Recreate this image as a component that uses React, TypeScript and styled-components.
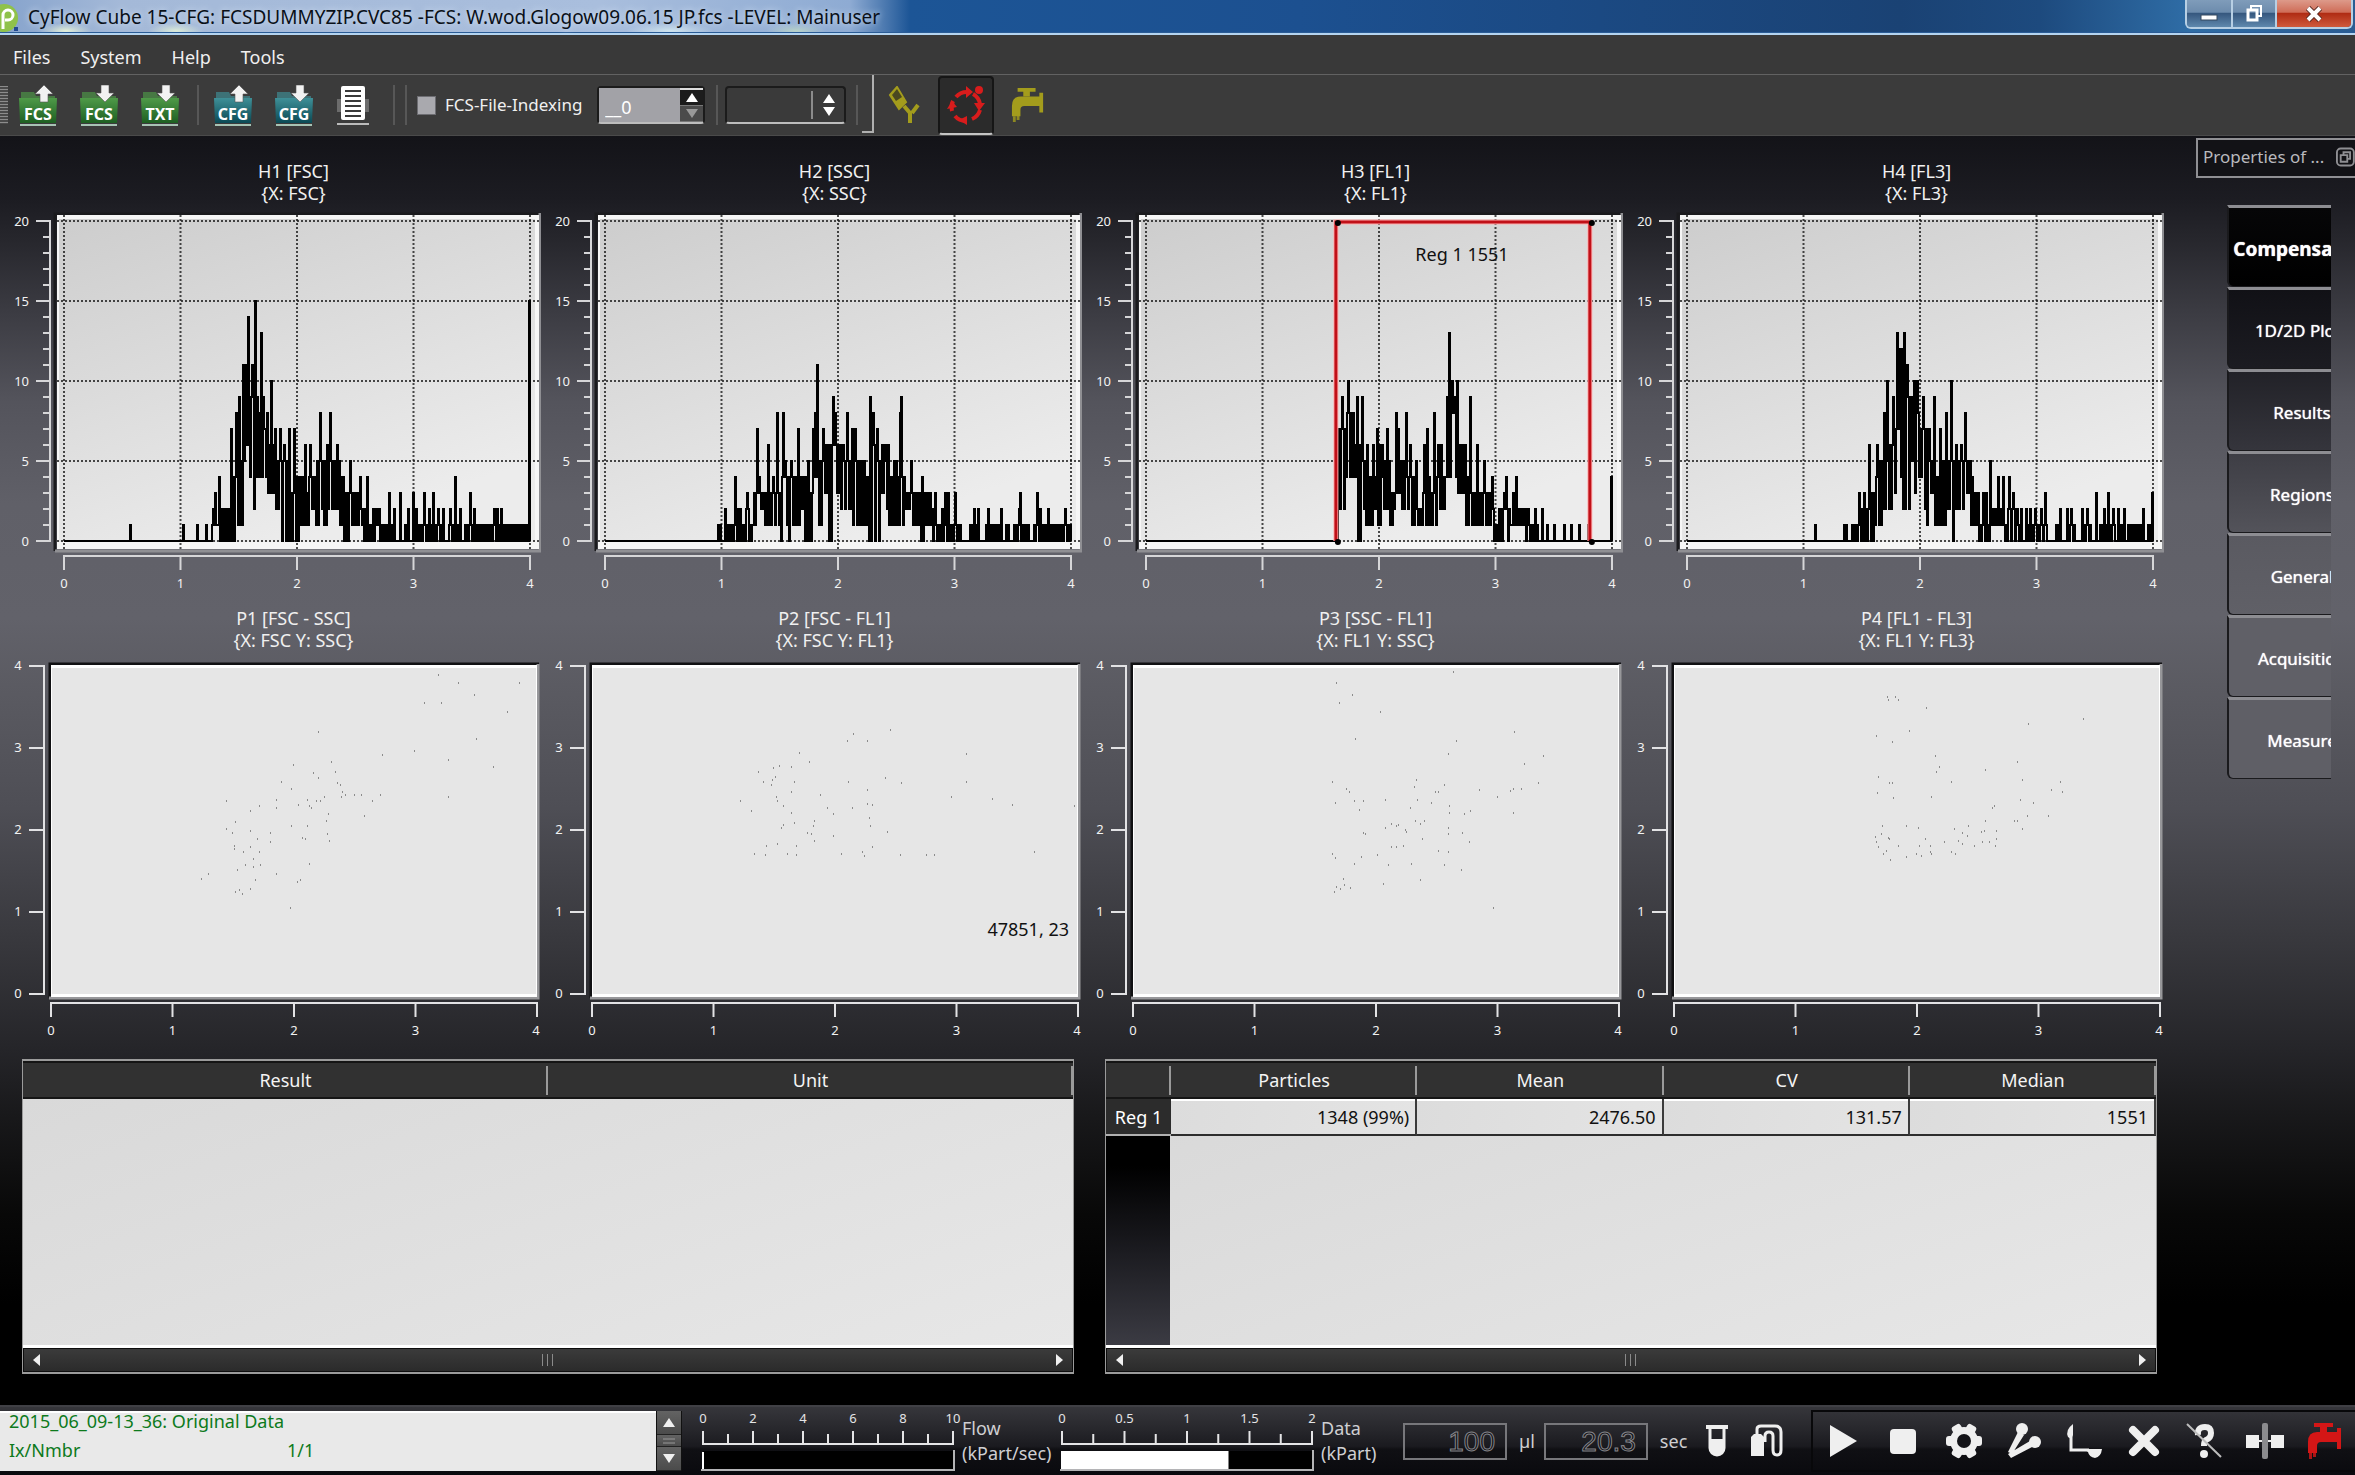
import React from "react";
import styled, { createGlobalStyle, css } from "styled-components";

const GlobalStyle = createGlobalStyle`
  * { box-sizing: border-box; }
  body {
    margin: 0;
    background: #000;
    color: #f0f0f0;
    font: 18px/22px "Noto Sans", "Open Sans", sans-serif;
  }
  button, input, select { font: inherit; color: inherit; border: 0; padding: 0; background: none; border-radius: 0; }
  svg { display: block; }
`;

/* ---------- window frame ---------- */

const Window = styled.div`
  display: flex;
  flex-direction: column;
  min-height: 100vh;
  overflow: hidden;
`;

const TitleBar = styled.header`
  display: flex;
  align-items: center;
  height: 35px;
  border-bottom: 2px solid #b4d4f0;
  box-shadow: inset 0 -1px 0 #2a5c96;
  background:
    radial-gradient(ellipse 26px 8px at 66px 31px, #e4f0d8, transparent),
    radial-gradient(ellipse 28px 8px at 176px 31px, #dcebd8, transparent),
    radial-gradient(ellipse 44px 8px at 670px 31px, #cfe4ee, transparent),
    radial-gradient(ellipse 30px 8px at 796px 31px, #b8d2c8, transparent),
    linear-gradient(90deg, #86a3cc 0, #a4b9d8 120px, #a9bedd 600px, #8eabd3 850px, #1c5596 910px, #1c5090 1300px, #1a4274 1900px, #1d4a7e 2040px, #2f6da6 2190px, #2a5c92 100%);
`;

const AppLogo = styled.svg`
  flex: none;
  width: 20px;
  height: 32px;
`;

const WindowTitle = styled.h1`
  flex: 1;
  margin: 0 0 0 8px;
  font-size: 19px;
  font-weight: 400;
  color: #0a1018;
  text-shadow: 0 0 6px #dbe7f6;
  white-space: nowrap;
`;

const WindowControls = styled.div`
  display: flex;
  align-self: flex-start;
  height: 29px;
  margin-right: 2px;
  border: 2px solid #b7cfe4;
  border-top: 0;
  border-radius: 0 0 6px 6px;
  overflow: hidden;
`;

const ControlButton = styled.button<{ $close?: boolean }>`
  display: grid;
  place-items: center;
  width: ${(p) => (p.$close ? 76 : 44)}px;
  background: linear-gradient(#7f9cba 0, #6d8cad 45%, #36587f 50%, #5f88ad 100%);
  & + & { border-left: 2px solid #b7cfe4; }
  ${(p) => p.$close && css`background: linear-gradient(#dd9a8a 0, #cf6d58 45%, #b02c14 50%, #cf5a3c 100%);`}
`;

const MenuBar = styled.nav`
  display: flex;
  gap: 30px;
  align-items: center;
  height: 40px;
  padding: 4px 0 0 13px;
  border-bottom: 1px solid #626262;
  background: #393939;
`;

const MenuButton = styled.button`
  line-height: 24px;
`;

/* ---------- toolbar ---------- */

const ToolBar = styled.div`
  display: flex;
  align-items: center;
  height: 61px;
  background: #3b3b3b;
  border-bottom: 1px solid #4a4a4a;
`;

const Grip = styled.span`
  width: 8px;
  height: 38px;
  margin-right: 11px;
  background: repeating-linear-gradient(#8c8c8c 0 1px, #4a4a4a 1px 3px);
`;

const ToolGroup = styled.div<{ $gap?: number }>`
  display: flex;
  align-items: center;
  gap: ${(p) => p.$gap ?? 23}px;
`;

const ToolButton = styled.button`
  display: block;
`;

const ModeButton = styled.button<{ $on?: boolean }>`
  display: grid;
  place-items: center;
  width: 56px;
  height: 59px;
  border-radius: 4px;
  ${(p) => p.$on && css`
    background: #2b2b2b;
    border: 2px solid #161616;
    border-bottom: 2px solid #c4c4c4;
  `}
`;

const Divider = styled.span<{ $l?: number; $r?: number }>`
  width: 2px;
  height: 40px;
  margin: 0 ${(p) => p.$r ?? 10}px 0 ${(p) => p.$l ?? 10}px;
  background: #575757;
`;

const Handle = styled.span`
  align-self: stretch;
  width: 12px;
  margin: 0 2px 2px 4px;
  border: 2px solid #b0b0b0;
  border-left: 0;
  border-top: 0;
`;

const CheckLabel = styled.label`
  display: flex;
  align-items: center;
  gap: 9px;
  font-size: 17px;
  white-space: nowrap;
`;

const CheckBox = styled.input`
  appearance: none;
  width: 19px;
  height: 19px;
  margin: 0;
  background: #a9a9ae;
  border: 1px solid #6d6d72;
`;

const SpinBox = styled.div`
  display: flex;
  width: 108px;
  height: 38px;
  margin-left: 15px;
  border: 2px solid #1b1b1b;
  border-bottom: 2px solid #bdbdbd;
  border-radius: 4px;
`;

const SpinInput = styled.input`
  flex: 1;
  min-width: 0;
  padding: 4px 0 0 6px;
  background: #a2a2a7;
  color: #fff;
`;

const SpinArrows = styled.div`
  display: grid;
  grid-template-rows: 1fr 1fr;
  width: 23px;
  border-top: 2px solid #ddd;
`;

const SpinArrow = styled.button<{ $dim?: boolean }>`
  display: grid;
  place-items: center;
  background: ${(p) => (p.$dim ? "#4b4b4b" : "#1c1c1c")};
  color: ${(p) => (p.$dim ? "#999" : "#fff")};
  border-bottom: 1px solid #777;
`;

const ComboBox = styled.div`
  position: relative;
  width: 121px;
  height: 38px;
  border: 2px solid #1b1b1b;
  border-bottom: 2px solid #bdbdbd;
  border-radius: 4px;
  background: #3a3a3a;
`;

const ComboSelect = styled.select`
  appearance: none;
  width: 100%;
  height: 100%;
`;

const ComboArrows = styled.span`
  position: absolute;
  top: 3px;
  right: 0;
  bottom: 3px;
  display: grid;
  place-items: center;
  width: 33px;
  border-left: 2px solid #8c8c8c;
  pointer-events: none;
`;

/* ---------- workspace ---------- */

const Main = styled.main`
  display: grid;
  flex: 1;
  grid-template-columns: minmax(0, 1fr) 191px;
  background: linear-gradient(#131318 0, #1c1c22 5%, #26262c 8%, #3c3c43 14%, #54545c 21%, #606068 29%, #62626a 38%, #5a5a61 44%, #4e4e55 53%, #39393e 63%, #252529 72%, #19191b 77%, #080808 85%, #000 92%);
`;

const Workspace = styled.section`
  display: flex;
  flex-direction: column;
  gap: 16px;
  padding: 24px 0 31px;
`;

const PlotGrid = styled.div`
  display: grid;
  grid-template-columns: repeat(4, minmax(0, 1fr));
  row-gap: 11px;
`;

const Plot = styled.figure`
  margin: 0;
`;

const PlotTitle = styled.figcaption`
  padding-left: 46px;
  text-align: center;
  white-space: pre-line;
`;

const PlotSvg = styled.svg`
  width: 100%;
  height: auto;
  font: 13px "Noto Sans", sans-serif;
`;

const TableRow = styled.div`
  display: grid;
  flex: 1;
  grid-template-columns: 1fr 1fr;
  gap: 31px;
  padding: 0 7px 0 22px;
`;

const TablePanel = styled.section`
  display: flex;
  flex-direction: column;
  min-height: 280px;
  border: 2px solid #9b9b9b;
  border-left-width: 1px;
  border-right-width: 1px;
`;

const TableArea = styled.div<{ $rowHead?: boolean }>`
  flex: 1;
  border-bottom: 3px solid #fff;
  background: ${(p) => p.$rowHead && "linear-gradient(#000 30px, #1b1b20 55%, #3b3b43) 0 0 / 64px 100% no-repeat,"}
    linear-gradient(160deg, #d9d9d9, #e7e7e7);
`;

const Table = styled.table`
  width: 100%;
  border-collapse: separate;
  border-spacing: 0;
  table-layout: fixed;
`;

const HeadCell = styled.th<{ $w?: number }>`
  width: ${(p) => (p.$w ? `${p.$w}px` : "auto")};
  height: 38px;
  padding: 0;
  font-weight: 400;
  color: #f4f4f4;
  border-bottom: 2px solid #151515;
  border-top: 2px solid #151515;
  background:
    linear-gradient(#9a9a9a, #9a9a9a) 100% 3px / 2px 29px no-repeat,
    #313131;
`;

const RowHead = styled.th`
  height: 37px;
  padding: 0;
  font-weight: 400;
  color: #fff;
  background: #2c2c2c;
  border-bottom: 2px solid #b0b0b0;
`;

const Cell = styled.td`
  padding: 0 6px 0 0;
  text-align: right;
  color: #111;
  background: linear-gradient(100deg, #dcdcdc, #e4e4e4);
  border-right: 2px solid #3b3b3b;
  border-bottom: 2px solid #2d2d2d;
  box-shadow: inset 0 2px 0 #fff;
`;

const ScrollBar = styled.div`
  display: flex;
  align-items: center;
  justify-content: space-between;
  height: 24px;
  border: 1px solid #0d0d0d;
  background: linear-gradient(#3b3b3b, #2b2b2b);
`;

const ScrollButton = styled.button`
  display: grid;
  place-items: center;
  width: 25px;
  height: 22px;
`;

const Thumb = styled.span`
  width: 12px;
  height: 12px;
  background: repeating-linear-gradient(90deg, #8a8a8a 0 1px, transparent 1px 5px);
`;

/* ---------- properties dock ---------- */

const Dock = styled.aside`
  padding-top: 2px;
`;

const DockTitle = styled.h2`
  display: flex;
  align-items: center;
  gap: 12px;
  height: 40px;
  margin: 0 0 27px 32px;
  padding: 0 0 2px 5px;
  font-size: 17px;
  font-weight: 400;
  color: #b9b9bd;
  white-space: nowrap;
  overflow: hidden;
  border: 2px solid #8f8f93;
  border-right: 0;
  background: #121216;
`;

const TabStrip = styled.div`
  width: 104px;
  margin-left: 63px;
  overflow: hidden;
`;

const Tab = styled.button<{ $bg: string; $active?: boolean }>`
  display: block;
  width: 148px;
  height: 82px;
  padding-top: 4px;
  font-size: ${(p) => (p.$active ? 19 : 17)}px;
  font-weight: ${(p) => (p.$active ? 700 : 400)};
  color: #fff;
  text-align: center;
  text-shadow: 0 0 1px #fff;
  background: ${(p) => p.$bg};
  border-top: 3px solid #8d8d92;
  border-left: 2px solid #1a1a1d;
  border-bottom: 1px solid #1a1a1d;
  border-radius: 0 0 0 6px;
`;

/* ---------- status bar ---------- */

const StatusBar = styled.footer`
  display: flex;
  align-items: center;
  height: 70px;
  border-top: 2px solid #404045;
  background: linear-gradient(#36363b 0, #26262b 35%, #1a1a1f 58%, #101014 62%, #0a0a0e 100%);
`;

const Log = styled.dl`
  display: grid;
  grid-template-columns: 278px 1fr;
  align-content: start;
  flex: none;
  width: 656px;
  height: 60px;
  margin: 0;
  padding-left: 9px;
  line-height: 29px;
  color: #0d7a1c;
  background: #e9e9e9;
  border-top: 2px solid #fff;
  white-space: nowrap;
`;

const LogText = styled.dt<{ $wide?: boolean }>`
  margin: -6px 0 6px;
  grid-column: ${(p) => (p.$wide ? "1 / -1" : "auto")};
`;

const LogValue = styled.dd`
  margin: -6px 0 6px;
`;

const LogScroll = styled.div`
  display: grid;
  grid-template-rows: 24px 12px 24px;
  width: 26px;
  padding: 0 1px;
  background: #111;
  margin-right: 12px;
`;

const LogScrollButton = styled.button`
  display: grid;
  place-items: center;
  background: linear-gradient(#636363, #4b4b4b);
  border-bottom: 1px solid #222;
`;

const GaugeSvg = styled.svg`
  flex: none;
  font: 13px "Noto Sans", sans-serif;
`;

const GaugeLabel = styled.span<{ $w: number }>`
  flex: none;
  width: ${(p) => p.$w}px;
  line-height: 25px;
  color: #cfcfd2;
  white-space: pre-line;
`;

const Lcd = styled.output`
  width: 104px;
  height: 37px;
  padding-right: 10px;
  border: 2px solid #77777b;
  text-align: right;
  font: 28px/33px "Liberation Sans", sans-serif;
  color: #121216;
  -webkit-text-stroke: 1px #85858a;
`;

const Unit = styled.span`
  margin: 0 9px 0 12px;
  color: #cfcfd2;
`;

const DeviceButtons = styled.div`
  display: flex;
  gap: 22px;
  margin-left: 10px;
`;

const ActionBar = styled.div`
  display: flex;
  width: 544px;
  height: 62px;
  margin-left: auto;
  border: 2px solid #08080a;
  border-right: 0;
`;

const ActionButton = styled.button`
  display: grid;
  place-items: center;
  flex: 1;
  min-width: 0;
`;

/* ---------- icons ---------- */

const Arrow = ({ dir, w = 12, h = 9 }: { dir: "up" | "down" | "left" | "right"; w?: number; h?: number }) => {
  const d = {
    up: "M0 10L5 0L10 10Z",
    down: "M0 0L5 10L10 0Z",
    left: "M10 0L0 5L10 10Z",
    right: "M0 0L10 5L0 10Z",
  }[dir];
  return (
    <svg width={w} height={h} viewBox="0 0 10 10" preserveAspectRatio="none" aria-hidden="true">
      <path d={d} fill="currentColor" />
    </svg>
  );
};

const FolderIcon = ({ label, tone, dir }: { label: string; tone: "green" | "teal"; dir: "up" | "down" }) => {
  const c = tone === "green" ? ["#4f9a48", "#1d5f22"] : ["#3f9098", "#0b4a55"];
  const id = `folder-${tone}`;
  return (
    <svg width="38" height="41" viewBox="0 0 38 41" aria-hidden="true">
      <defs>
        <linearGradient id={id} x1="0" y1="0" x2="0" y2="1">
          <stop offset="0" stopColor={c[0]} />
          <stop offset="1" stopColor={c[1]} />
        </linearGradient>
      </defs>
      <path d="M2 7h13l2 4h19v9H2z" fill={c[0]} opacity=".65" />
      <path d="M0 13h38l-1 25H1z" fill={`url(#${id})`} />
      <path d={dir === "up" ? "M25 0l9 9h-5v8h-8V9h-5z" : "M21 0h8v8h5l-9 9-9-9h5z"} fill="#f2f2f2" stroke="#555" strokeWidth=".6" />
      <text x="19" y="35" textAnchor="middle" fontFamily='"Noto Sans", sans-serif' fontSize="16" fontWeight="700" fill="#fff">{label}</text>
      <path d="M1 40h36" stroke="#a7c3b4" strokeWidth="2" />
    </svg>
  );
};

const PageIcon = () => (
  <svg width="34" height="41" viewBox="0 0 34 41" aria-hidden="true">
    <path d="M1 14h32v13H1z" fill="#8d8d8d" opacity=".6" />
    <rect x="5" y="1" width="24" height="34" rx="2" fill="#fff" />
    <path d="M9 6h16M9 11h16M9 16h16M9 21h16M9 26h16M9 31h16" stroke="#3a3a3a" strokeWidth="2" />
    <path d="M1 39h32" stroke="#bbb" strokeWidth="2" />
  </svg>
);

const PourIcon = () => (
  <svg width="32" height="38" viewBox="0 0 32 38" fill="none" stroke="#a39c1c" aria-hidden="true">
    <path d="M2 9L9 1l9 15-7 7z" fill="#a39c1c" strokeWidth="2" />
    <path d="M4 9l5-6 5 8-6 4z" fill="#4a4820" stroke="none" />
    <path d="M16 20l6 7v10M30 19l-6 8" strokeWidth="4" />
  </svg>
);

const CycleIcon = () => (
  <svg width="38" height="40" viewBox="0 0 38 40" fill="none" stroke="#d81c1c" strokeWidth="4" aria-hidden="true">
    <path d="M9 12A14 14 0 0 1 20 7" />
    <path d="M26 9A14 14 0 0 1 33 19" />
    <path d="M33 25A14 14 0 0 1 25 34" />
    <path d="M19 36A14 14 0 0 1 8 31" />
    <path d="M5 26A14 14 0 0 1 6 16" />
    <path d="M19 1l7 6-7 6zM38 18l-6 8-5-8zM20 31l-8 4 8 5zM0 24l5-8 5 6z" fill="#d81c1c" stroke="none" />
    <circle cx="32" cy="5" r="4" fill="#d81c1c" stroke="none" />
  </svg>
);

const TapIcon = ({ color, w = 36 }: { color: string; w?: number }) => (
  <svg width={w} height="38" viewBox="0 0 36 38" fill={color} aria-hidden="true">
    <path d="M7 1h19v4H7zM13 5h7v5h-7z" />
    <path d="M10 10h20V6h4v21h-4v-7H14q-4 0-4 4v7H1V20Q1 10 10 10z" />
    <path d="M2 31h3v6H2zM6 30h3v5H6z" opacity=".8" />
  </svg>
);

const W = "#efefef";

const TubeIcon = () => (
  <svg width="22" height="34" viewBox="0 0 22 34" fill="none" aria-hidden="true">
    <path d="M0 3h22" stroke={W} strokeWidth="4" />
    <path d="M4 4v20a7 7 0 0 0 14 0V4" stroke={W} strokeWidth="3" />
    <path d="M4 15h14v9a7 7 0 0 1-14 0z" fill={W} />
  </svg>
);

const PumpIcon = () => (
  <svg width="34" height="34" viewBox="0 0 34 34" fill="none" aria-hidden="true">
    <path d="M1 13l3-3h7l3 3v19H1z" fill={W} />
    <path d="M7 10V5q0-3 4-3h14q6 0 6 6v18q0 5-4 5t-4-5V12q0-4-4-4t-4 4v6" stroke={W} strokeWidth="3" />
  </svg>
);

const PlayIcon = () => (
  <svg width="30" height="34" viewBox="0 0 30 34" aria-hidden="true"><path d="M2 1l27 16L2 33z" fill={W} /></svg>
);

const StopIcon = () => (
  <svg width="28" height="28" viewBox="0 0 28 28" aria-hidden="true"><rect x="1" y="2" width="26" height="25" rx="4" fill={W} /></svg>
);

const GearIcon = () => (
  <svg width="38" height="38" viewBox="0 0 38 38" aria-hidden="true">
    <g fill={W}>
      {[30, 90, 150].map((a) => (
        <rect key={a} x="14" y="1" width="10" height="36" rx="3" transform={`rotate(${a} 19 19)`} />
      ))}
      <circle cx="19" cy="19" r="14" />
    </g>
    <circle cx="19" cy="19" r="7" fill="#141418" />
  </svg>
);

const ProbesIcon = () => (
  <svg width="36" height="36" viewBox="0 0 36 36" fill={W} aria-hidden="true">
    <circle cx="16" cy="6" r="6" />
    <circle cx="29" cy="19" r="6" />
    <path d="M12 9l6 3L6 31l-4-2zM24 18l4 5L5 35l-3-4z" />
  </svg>
);

const SeatIcon = () => (
  <svg width="38" height="36" viewBox="0 0 38 36" fill={W} aria-hidden="true">
    <path d="M8 1q-8 6-5 13l3 2 2-4z" />
    <path d="M6 12v15h18" fill="none" stroke={W} strokeWidth="3" />
    <path d="M19 26h18q-1 8-7 9-6-1-7-6z" />
  </svg>
);

const CrossIcon = () => (
  <svg width="32" height="32" viewBox="0 0 32 32" aria-hidden="true">
    <path d="M5 5l22 22M27 5L5 27" stroke={W} strokeWidth="8" strokeLinecap="round" />
  </svg>
);

const HelpIcon = () => (
  <svg width="36" height="36" viewBox="0 0 36 36" fill="none" stroke={W} aria-hidden="true">
    <path d="M12 12q-1-8 7-8 6 0 6 6 0 5-5 7-2 1-2 6" strokeWidth="6" />
    <circle cx="18" cy="31" r="4" fill={W} stroke="none" />
    <path d="M1 1l34 33" strokeWidth="2" stroke="#bdbdbd" />
  </svg>
);

const SplitIcon = () => (
  <svg width="40" height="38" viewBox="0 0 40 38" aria-hidden="true">
    <path d="M1 13h13v13H1zM26 13h13v13H26z" fill={W} />
    <path d="M13 19h14" stroke={W} strokeWidth="2" />
    <rect x="17" y="1" width="6" height="36" rx="2" fill="#8b8b8e" />
  </svg>
);

/* ---------- plots ---------- */

type Band = [x: number, low: number, high: number];
type Spike = [x: number, count: number];

interface Histogram {
  title: string;
  bands: Band[];
  spikes: Spike[];
  region?: { from: number; to: number; label: string };
}

/* Each band holds from its x up to the next one; counts alternate between low and high. */
const histograms: Histogram[] = [
  {
    title: "H1 [FSC]\n{X: FSC}",
    bands: [[1.27, 0, 2], [1.41, 0, 4], [1.45, 1, 5], [1.53, 4, 6], [1.57, 4, 9], [1.7, 4, 7], [1.74, 2, 6], [1.8, 2, 5], [1.86, 0, 5], [1.92, 0, 4], [2.0, 1, 4], [2.1, 2, 4], [2.16, 1, 5], [2.25, 2, 5], [2.36, 1, 4], [2.4, 0, 3], [2.6, 0, 2], [2.7, 0, 1]],
    spikes: [[0.565, 1], [1.02, 1], [1.14, 1], [1.22, 1], [1.3, 3], [1.33, 4], [1.43, 7], [1.48, 8], [1.5, 9], [1.535, 11], [1.56, 11], [1.58, 14], [1.61, 11], [1.637, 15], [1.67, 8], [1.695, 13], [1.72, 7], [1.74, 8], [1.78, 10], [1.81, 7], [1.85, 7], [1.89, 6], [1.935, 7], [1.978, 7], [2.065, 6], [2.11, 6], [2.2, 8], [2.26, 6], [2.287, 8], [2.34, 6], [2.455, 5], [2.54, 4], [2.6, 4], [2.79, 3], [2.83, 2], [2.88, 3], [2.95, 2], [2.995, 3], [3.02, 2], [3.09, 3], [3.13, 2], [3.17, 3], [3.21, 2], [3.25, 2], [3.31, 2], [3.36, 4], [3.4, 2], [3.487, 3], [3.52, 2], [3.69, 2], [3.72, 2], [3.75, 2], [3.995, 15]],
  },
  {
    title: "H2 [SSC]\n{X: SSC}",
    bands: [[0.944, 0, 1], [1.1, 0, 2], [1.27, 1, 3], [1.45, 1, 3], [1.5, 0, 4], [1.6, 1, 4], [1.7, 0, 4], [1.78, 1, 5], [1.86, 2, 6], [2.0, 2, 5], [2.1, 1, 5], [2.2, 1, 4], [2.26, 2, 6], [2.38, 1, 5], [2.5, 1, 4], [2.58, 1, 4], [2.64, 0, 3], [2.75, 0, 2], [2.96, 0, 1]],
    spikes: [[1.03, 2], [1.115, 4], [1.22, 3], [1.305, 7], [1.32, 4], [1.4, 6], [1.44, 4], [1.48, 8], [1.526, 8], [1.545, 5], [1.6, 5], [1.655, 7], [1.74, 5], [1.786, 7], [1.8, 8], [1.822, 11], [1.875, 7], [1.954, 9], [1.97, 8], [2.04, 6], [2.08, 8], [2.12, 7], [2.15, 7], [2.276, 9], [2.3, 8], [2.335, 7], [2.4, 6], [2.43, 6], [2.53, 8], [2.543, 9], [2.625, 5], [2.717, 4], [2.786, 3], [2.83, 3], [2.915, 3], [2.94, 3], [3.003, 3], [3.17, 2], [3.2, 2], [3.29, 2], [3.4, 2], [3.55, 2], [3.566, 3], [3.704, 3], [3.73, 2], [3.8, 2], [3.95, 2]],
  },
  {
    title: "H3 [FL1]\n{X: FL1}",
    bands: [[1.63, 4, 7], [1.67, 4, 8], [1.76, 4, 6], [1.8, 2, 6], [1.87, 1, 4], [2.0, 2, 5], [2.08, 1, 3], [2.13, 2, 5], [2.2, 1, 4], [2.3, 1, 3], [2.37, 1, 4], [2.5, 2, 5], [2.57, 4, 8], [2.66, 3, 6], [2.72, 1, 4], [2.86, 0, 3], [2.94, 0, 2], [3.23, 0, 1], [3.43, 0, 0]],
    spikes: [[1.68, 9], [1.735, 10], [1.775, 8], [1.815, 9], [1.857, 9], [1.9, 6], [1.95, 6], [1.98, 7], [2.0, 6], [2.03, 6], [2.07, 7], [2.145, 8], [2.16, 7], [2.235, 8], [2.265, 6], [2.32, 5], [2.39, 6], [2.416, 7], [2.472, 8], [2.51, 6], [2.53, 6], [2.58, 9], [2.603, 13], [2.625, 10], [2.64, 9], [2.673, 10], [2.7, 6], [2.785, 9], [2.84, 6], [2.9, 5], [2.97, 4], [3.07, 3], [3.094, 4], [3.15, 3], [3.18, 4], [3.28, 2], [3.34, 2], [3.4, 2], [3.44, 1], [3.5, 1], [3.59, 1], [3.645, 1], [3.72, 1], [3.79, 1], [3.99, 4]],
    region: { from: 1.63, to: 3.81, label: "Reg 1 1551" },
  },
  {
    title: "H4 [FL3]\n{X: FL3}",
    bands: [[1.31, 0, 1], [1.45, 0, 2], [1.53, 0, 3], [1.6, 1, 5], [1.66, 2, 6], [1.76, 3, 7], [1.8, 4, 9], [1.9, 5, 8], [1.99, 4, 7], [2.06, 3, 5], [2.12, 1, 5], [2.2, 2, 5], [2.34, 2, 5], [2.42, 1, 3], [2.5, 0, 2], [2.8, 0, 1]],
    spikes: [[1.1, 1], [1.48, 3], [1.52, 3], [1.565, 6], [1.63, 6], [1.69, 8], [1.716, 10], [1.765, 9], [1.805, 13], [1.82, 12], [1.845, 12], [1.864, 13], [1.89, 11], [1.93, 9], [1.95, 10], [1.97, 10], [2.03, 9], [2.08, 7], [2.12, 9], [2.17, 7], [2.22, 8], [2.27, 10], [2.31, 6], [2.35, 6], [2.383, 8], [2.45, 4], [2.54, 3], [2.57, 3], [2.597, 5], [2.666, 4], [2.712, 4], [2.768, 4], [2.8, 3], [2.83, 2], [2.87, 2], [2.91, 2], [2.94, 2], [2.99, 2], [3.04, 2], [3.074, 3], [3.2, 2], [3.26, 2], [3.3, 2], [3.39, 2], [3.43, 2], [3.514, 3], [3.58, 2], [3.616, 3], [3.66, 2], [3.7, 2], [3.75, 2], [3.91, 2], [3.99, 3]],
  },
];

const HX = (v: number) => 64 + v * 116.5;
const HY = (v: number) => 337 - v * 16;
const BINS = 466;

const tracePath = ({ bands, spikes }: Histogram) => {
  let seed = 7;
  const random = () => (seed = (seed * 16807) % 2147483647) / 2147483647;
  let low = 0;
  let high = 0;
  const counts = Array.from({ length: BINS + 1 }, (_, i) => {
    const x = (i / BINS) * 4;
    const band = bands.filter((b) => b[0] <= x).pop();
    if (!band) return 0;
    if (i % 4 === 0) {
      low = band[1] > 1 && random() < 0.3 ? band[1] - 2 : band[1] + (random() < 0.3 && band[2] > band[1] + 1 ? 1 : 0);
      high = band[2] > 0 && random() < 0.25 ? band[2] - 1 : band[2];
    }
    return i % 2 ? high : low;
  });
  spikes.forEach(([x, count]) => {
    counts[Math.round((x / 4) * BINS)] = count;
  });
  return `M${HX(0)} ${HY(0)}` + counts.map((c, i) => `H${Math.round(HX((i / BINS) * 4))}V${HY(c)}`).join("");
};

const ticks = (n: number, step = 1) => Array.from({ length: n + 1 }, (_, i) => i * step);

const HistogramPlot = ({ data, index }: { data: Histogram; index: number }) => (
  <Plot>
    <PlotTitle>{data.title}</PlotTitle>
    <PlotSvg viewBox="0 0 541 392">
      <defs>
        <linearGradient id={`hist${index}`} x1="0" y1="0" x2=".5" y2="1">
          <stop offset="0" stopColor="#cdcdcd" />
          <stop offset="1" stopColor="#ececec" />
        </linearGradient>
      </defs>
      <path d="M55 347V10H541" fill="none" stroke="#1a1a1d" strokeWidth="3" />
      <path d="M540 9V347H55" fill="none" stroke="#8f8f93" strokeWidth="3" />
      <rect x="57" y="11" width="482" height="334" fill="#f6f6f6" />
      <rect x="59" y="15" width="476" height="323" fill={`url(#hist${index})`} />
      <g stroke="#111" strokeWidth="2" strokeDasharray="2 2">
        {ticks(4).map((v) => <path key={v} d={`M${HX(v)} 11V345`} opacity=".75" />)}
        {ticks(4, 5).map((v) => <path key={v} d={`M57 ${HY(v)}H539`} opacity=".75" />)}
      </g>
      <path d={tracePath(data)} fill="none" stroke="#000" strokeWidth="2" />
      <g stroke="#d6d6d8" strokeWidth="2" fill="none">
        <path d={`M50 ${HY(20) - 1}V338`} />
        {ticks(20).map((v) => <path key={v} d={`M${v % 5 ? 43 : 36} ${HY(v)}H50`} />)}
        <path d="M63 352H531" />
        {ticks(4).map((v) => <path key={v} d={`M${HX(v)} 352V366`} />)}
      </g>
      <g fill="#f2f2f2">
        {ticks(4, 5).map((v) => <text key={v} x="29" y={HY(v) + 5} textAnchor="end">{v}</text>)}
        {ticks(4).map((v) => <text key={v} x={HX(v)} y="384" textAnchor="middle">{v}</text>)}
      </g>
      {data.region && (
        <>
          <path d={`M${HX(data.region.from)} 337V18H${HX(data.region.to)}V337`} fill="none" stroke="#ffb0b0" strokeWidth="5" />
          <path d={`M${HX(data.region.from)} 337V18H${HX(data.region.to)}V337`} fill="none" stroke="#c01018" strokeWidth="3" />
          {[data.region.from, data.region.to].map((v) => (
            <React.Fragment key={v}>
              <circle cx={HX(v) + 2} cy="19" r="3" />
              <circle cx={HX(v) + 2} cy="338" r="3" />
            </React.Fragment>
          ))}
          <text x="380" y="57" textAnchor="middle" fontSize="18" fill="#111">{data.region.label}</text>
        </>
      )}
    </PlotSvg>
  </Plot>
);

interface Scatter {
  title: string;
  origin: number;
  points: string;
  note?: string;
}

const scatters: Scatter[] = [
  {
    title: "P1 [FSC - SSC]\n{X: FSC Y: SSC}",
    origin: 73,
    points: "624,252 652,276 739,277 675,312 604,337 628,337 722,363 453,424 678,445 590,480 544,494 638,509 703,529 417,522 471,514 446,547 478,543 453,562 401,573 480,578 485,583 415,594 487,603 492,613 504,613 514,613 542,613 486,618 462,618 638,619 394,628 438,628 322,632 450,632 456,632 530,632 369,647 424,642 441,647 443,651 394,652 357,662 467,671 518,676 464,690 335,695 415,706 438,706 322,716 357,721 331,728 385,726 466,731 430,741 434,746 366,745 385,755 469,751 333,767 357,769 333,776 347,783 369,785 361,804 349,824 361,828 370,824 441,819 338,838 297,850 394,849 286,864 363,869 427,869 423,874 357,894 340,898 335,905 345,909 413,952",
  },
  {
    title: "P2 [FSC - FL1]\n{X: FSC Y: FL1}",
    origin: 844,
    points: "1268,418 1216,430 1207,450 1235,450 1139,486 1376,490 1153,514 1110,527 1128,529 1102,533 1081,544 1104,559 1261,562 1088,573 1100,569 1132,573 1209,573 1284,577 1376,573 1099,583 1235,598 1128,603 1169,613 1106,618 1355,618 1414,624 1055,632 1107,632 1235,641 1242,642 1442,642 1116,647 1530,647 1179,652 1214,652 1070,662 1128,666 1187,671 1238,682 1160,690 1131,696 1116,703 1113,711 1158,706 1240,706 1150,726 1156,731 1264,725 1187,736 1160,751 1092,765 1108,760 1135,765 1242,770 1074,790 1090,794 1121,789 1135,794 1198,790 1228,785 1231,795 1282,794 1320,794 1331,794 1474,785",
    note: "47851, 23",
  },
  {
    title: "P3 [SSC - FL1]\n{X: FL1 Y: SSC}",
    origin: 75,
    points: "531,243 364,276 387,312 368,337 427,363 618,424 391,445 535,450 523,490 659,495 632,519 359,573 478,569 518,583 475,588 652,577 378,594 382,603 505,603 509,603 567,598 616,594 628,594 612,602 593,618 389,632 403,632 434,628 480,628 363,637 499,637 525,647 397,657 470,652 525,666 547,671 555,660 616,666 476,691 490,691 483,700 443,701 434,711 452,703 450,707 462,717 464,725 524,711 402,726 406,731 523,731 544,726 486,746 553,755 443,770 450,770 460,765 509,780 523,785 359,790 363,803 399,799 423,794 389,819 438,824 471,819 518,824 542,839 374,864 483,869 431,879 375,882 364,890 370,895 384,893 361,905 588,952",
  },
  {
    title: "P4 [FL1 - FL3]\n{X: FL1 Y: FL3}",
    origin: 846,
    points: "1149,318 1161,318 1151,327 1165,327 1205,352 1429,386 1350,401 1181,420 1134,435 1156,455 1217,495 1334,515 1223,529 1219,543 1289,539 1137,558 1152,578 1157,578 1240,573 1341,569 1395,573 1383,598 1399,603 1135,608 1212,618 1158,623 1338,628 1357,637 1301,647 1299,652 1348,676 1378,676 1289,691 1330,691 1334,691 1142,706 1177,706 1193,711 1265,706 1244,716 1341,716 1256,726 1287,721 1283,725 1305,721 1141,731 1132,740 1263,736 1150,741 1152,745 1203,746 1251,751 1134,755 1230,755 1256,760 1285,755 1294,755 1305,746 1137,770 1165,765 1195,765 1210,765 1273,765 1303,765 1148,780 1144,790 1191,790 1211,785 1212,790 1241,785 1246,790 1177,799 1197,795 1154,808",
  },
];

const SX = (v: number) => 51 + v * 121.5;
const SY = (v: number) => 343 - v * 82;

const ScatterPlot = ({ data }: { data: Scatter }) => (
  <Plot>
    <PlotTitle>{data.title}</PlotTitle>
    <PlotSvg viewBox="0 0 541 392">
      <path d="M50 347V13H539" fill="none" stroke="#111113" strokeWidth="3" />
      <path d="M538 13V347H49" fill="none" stroke="#97979a" strokeWidth="3" />
      <rect x="51" y="14" width="486" height="332" fill="#fff" />
      <rect x="52" y="17" width="484" height="326" fill="#e6e6e6" />
      <g fill="#8c8c8c">
        {data.points.split(" ").map((p) => {
          const [x, y] = p.split(",").map(Number);
          return <rect key={p} x={Math.round(SX((x - data.origin) / 173))} y={Math.round(SY((1213 - y) / 246))} width="1" height="2" />;
        })}
      </g>
      <g stroke="#e2e2e4" strokeWidth="2" fill="none">
        <path d="M44 14V344" />
        {ticks(4).map((v) => <path key={v} d={`M29 ${SY(v)}H44`} />)}
        <path d="M50 352H538" />
        {ticks(4).map((v) => <path key={v} d={`M${SX(v)} 352V366`} />)}
      </g>
      <g fill="#f2f2f2" textAnchor="middle">
        {ticks(4).map((v) => <text key={v} x="18" y={SY(v) + 4}>{v}</text>)}
        {ticks(4).map((v) => <text key={v} x={v === 4 ? SX(v) - 1 : SX(v)} y="384">{v}</text>)}
      </g>
      {data.note && <text x="528" y="285" textAnchor="end" fontSize="18" fill="#111">{data.note}</text>}
    </PlotSvg>
  </Plot>
);

const Gauge = ({ labels, fill = 0, name }: { labels: string[]; fill?: number; name: string }) => {
  const step = 250 / (labels.length - 1);
  return (
    <GaugeSvg width="268" height="64" viewBox="0 0 268 64" role="img" aria-label={name}>
      <g fill="#e4e4e6" textAnchor="middle">
        {labels.map((l, i) => <text key={l} x={9 + i * step} y="14">{l}</text>)}
      </g>
      <g stroke="#e4e4e6" strokeWidth="2">
        <path d="M8 35H260" />
        {labels.map((l, i) => <path key={l} d={`M${9 + i * step} 22V35`} />)}
        {labels.slice(1).map((l, i) => <path key={l} d={`M${9 + (i + 0.5) * step} 25V35`} />)}
      </g>
      <rect x="9" y="42" width="251" height="19" fill="#000" />
      <path d="M9 43V60" stroke="#fff" strokeWidth="2" />
      <path d="M260 41V61H7" fill="none" stroke="#b4b4b6" strokeWidth="2" />
      {fill > 0 && <rect x="8" y="42" width={250 * fill} height="18" fill="#fff" />}
    </GaugeSvg>
  );
};

/* ---------- tables ---------- */

const HScroll = () => (
  <ScrollBar>
    <ScrollButton aria-label="Scroll left"><Arrow dir="left" w={7} h={12} /></ScrollButton>
    <Thumb />
    <ScrollButton aria-label="Scroll right"><Arrow dir="right" w={7} h={12} /></ScrollButton>
  </ScrollBar>
);

const tabs: [string, string][] = [
  ["Compensation", "linear-gradient(#060607, #000)"],
  ["1D/2D Plots", "linear-gradient(#111116, #1c1c22)"],
  ["Results", "linear-gradient(#222228, #35353c)"],
  ["Regions", "linear-gradient(#3e3e45, #53535a)"],
  ["General", "linear-gradient(#5a5a61, #606067)"],
  ["Acquisition", "#606067"],
  ["Measure", "#5f5f66"],
];

const actions: [string, React.ReactNode][] = [
  ["Start", <PlayIcon />],
  ["Stop", <StopIcon />],
  ["Settings", <GearIcon />],
  ["Probes", <ProbesIcon />],
  ["Sample seat", <SeatIcon />],
  ["Cancel", <CrossIcon />],
  ["Help", <HelpIcon />],
  ["Split", <SplitIcon />],
  ["Drain", <TapIcon color="#d41616" />],
];

export default function App() {
  return (
    <Window>
      <GlobalStyle />
      <TitleBar>
        <AppLogo viewBox="0 0 20 32" aria-hidden="true">
          <circle cx="4" cy="17" r="14" fill="#8fc24a" />
          <path d="M3 28V14a5 5 0 1 1 5 5H5" fill="none" stroke="#fff" strokeWidth="3" />
          <rect x="14" y="26" width="4" height="4" fill="#234a90" />
        </AppLogo>
        <WindowTitle>CyFlow Cube 15-CFG: FCSDUMMYZIP.CVC85 -FCS: W.wod.Glogow09.06.15 JP.fcs -LEVEL: Mainuser</WindowTitle>
        <WindowControls>
          <ControlButton aria-label="Minimize">
            <svg width="18" height="20" viewBox="0 0 18 20"><rect x="1" y="11" width="16" height="5" fill="#fff" stroke="#34485e" /></svg>
          </ControlButton>
          <ControlButton aria-label="Restore">
            <svg width="18" height="20" viewBox="0 0 18 20" fill="none">
              <path d="M6 5V2h10v10h-3" stroke="#fff" strokeWidth="2" />
              <rect x="3" y="6" width="9" height="10" stroke="#fff" strokeWidth="3" />
            </svg>
          </ControlButton>
          <ControlButton $close aria-label="Close">
            <svg width="18" height="16" viewBox="0 0 18 16"><path d="M3 2l12 12M15 2L3 14" stroke="#5a2a22" strokeWidth="6" /><path d="M3 2l12 12M15 2L3 14" stroke="#fff" strokeWidth="4" /></svg>
          </ControlButton>
        </WindowControls>
      </TitleBar>

      <MenuBar>
        {["Files", "System", "Help", "Tools"].map((m) => <MenuButton key={m}>{m}</MenuButton>)}
      </MenuBar>

      <ToolBar>
        <Grip />
        <ToolGroup>
          <ToolButton aria-label="Load FCS"><FolderIcon label="FCS" tone="green" dir="up" /></ToolButton>
          <ToolButton aria-label="Save FCS"><FolderIcon label="FCS" tone="green" dir="down" /></ToolButton>
          <ToolButton aria-label="Save TXT"><FolderIcon label="TXT" tone="green" dir="down" /></ToolButton>
        </ToolGroup>
        <Divider $l={18} $r={15} />
        <ToolGroup>
          <ToolButton aria-label="Load CFG"><FolderIcon label="CFG" tone="teal" dir="up" /></ToolButton>
          <ToolButton aria-label="Save CFG"><FolderIcon label="CFG" tone="teal" dir="down" /></ToolButton>
          <ToolButton aria-label="Report"><PageIcon /></ToolButton>
        </ToolGroup>
        <Divider $l={23} />
        <Divider $l={0} />
        <CheckLabel>
          <CheckBox type="checkbox" />
          FCS-File-Indexing
        </CheckLabel>
        <SpinBox>
          <SpinInput aria-label="File index" defaultValue="__0" />
          <SpinArrows>
            <SpinArrow aria-label="Increase"><Arrow dir="up" /></SpinArrow>
            <SpinArrow aria-label="Decrease" $dim><Arrow dir="down" /></SpinArrow>
          </SpinArrows>
        </SpinBox>
        <Divider $l={11} $r={7} />
        <ComboBox>
          <ComboSelect aria-label="File selection"><option /></ComboSelect>
          <ComboArrows>
            <svg width="12" height="22" viewBox="0 0 12 22"><path d="M0 9L6 0l6 9zM0 13l6 9 6-9z" fill="#fff" /></svg>
          </ComboArrows>
        </ComboBox>
        <Divider $l={10} $r={0} />
        <Handle />
        <ToolGroup $gap={6}>
          <ModeButton aria-label="Fill"><PourIcon /></ModeButton>
          <ModeButton aria-label="Cycle" $on><CycleIcon /></ModeButton>
          <ModeButton aria-label="Tap"><TapIcon color="#a39c1c" w={34} /></ModeButton>
        </ToolGroup>
      </ToolBar>

      <Main>
        <Workspace>
          <PlotGrid>
            {histograms.map((h, i) => <HistogramPlot key={h.title} data={h} index={i} />)}
            {scatters.map((s) => <ScatterPlot key={s.title} data={s} />)}
          </PlotGrid>
          <TableRow>
            <TablePanel>
              <Table>
                <thead>
                  <tr><HeadCell>Result</HeadCell><HeadCell>Unit</HeadCell></tr>
                </thead>
              </Table>
              <TableArea />
              <HScroll />
            </TablePanel>
            <TablePanel>
              <Table>
                <thead>
                  <tr>
                    <HeadCell $w={65} />
                    {["Particles", "Mean", "CV", "Median"].map((h) => <HeadCell key={h}>{h}</HeadCell>)}
                  </tr>
                </thead>
                <tbody>
                  <tr>
                    <RowHead scope="row">Reg 1</RowHead>
                    <Cell>1348 (99%)</Cell>
                    <Cell>2476.50</Cell>
                    <Cell>131.57</Cell>
                    <Cell>1551</Cell>
                  </tr>
                </tbody>
              </Table>
              <TableArea $rowHead />
              <HScroll />
            </TablePanel>
          </TableRow>
        </Workspace>

        <Dock>
          <DockTitle>
            Properties of ...
            <svg width="20" height="20" viewBox="0 0 20 20" fill="none" stroke="#8f8f93" strokeWidth="2">
              <rect x="1" y="1" width="18" height="18" rx="4" />
              <path d="M8 7V5h7v7h-2M5 8h7v7H5z" />
            </svg>
          </DockTitle>
          <TabStrip>
            {tabs.map(([name, bg], i) => <Tab key={name} $bg={bg} $active={i === 0}>{name}</Tab>)}
          </TabStrip>
        </Dock>
      </Main>

      <StatusBar>
        <Log>
          <LogText $wide>2015_06_09-13_36: Original Data</LogText>
          <LogText>Ix/Nmbr</LogText>
          <LogValue>1/1</LogValue>
        </Log>
        <LogScroll>
          <LogScrollButton aria-label="Scroll up"><Arrow dir="up" /></LogScrollButton>
          <LogScrollButton aria-label="Scroll thumb">
            <svg width="12" height="6" viewBox="0 0 12 6"><path d="M0 1h12M0 5h12" stroke="#999" /></svg>
          </LogScrollButton>
          <LogScrollButton aria-label="Scroll down"><Arrow dir="down" /></LogScrollButton>
        </LogScroll>
        <Gauge name="Flow" labels={["0", "2", "4", "6", "8", "10"]} />
        <GaugeLabel $w={91}>{"Flow\n(kPart/sec)"}</GaugeLabel>
        <Gauge name="Data" labels={["0", "0.5", "1", "1.5", "2"]} fill={0.67} />
        <GaugeLabel $w={82}>{"Data\n(kPart)"}</GaugeLabel>
        <Lcd aria-label="Volume">100</Lcd>
        <Unit>µl</Unit>
        <Lcd aria-label="Time">20.3</Lcd>
        <Unit>sec</Unit>
        <DeviceButtons>
          <ToolButton aria-label="Sample tube"><TubeIcon /></ToolButton>
          <ToolButton aria-label="Pump"><PumpIcon /></ToolButton>
        </DeviceButtons>
        <ActionBar>
          {actions.map(([name, icon]) => <ActionButton key={name} aria-label={name}>{icon}</ActionButton>)}
        </ActionBar>
      </StatusBar>
    </Window>
  );
}
